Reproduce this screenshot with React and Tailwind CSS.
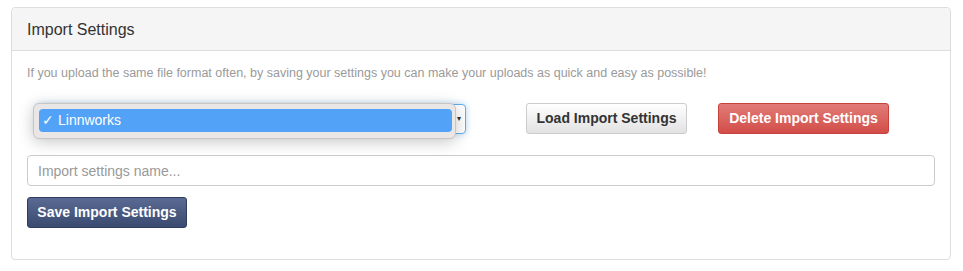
import React, { useState } from "react";

export default function App() {
  const [name, setName] = useState("");

  return (
    <div className="min-h-screen bg-white pt-[7px] pl-[11px] font-['Liberation_Sans',Arial,sans-serif]">
      <div className="w-[940px] h-[253px] rounded-[4px] border border-[#dddddd] bg-white">
        <div className="h-[43px] flex items-center px-[15px] bg-[#f5f5f5] border-b border-[#dddddd] rounded-t-[4px]">
          <h3 className="text-[16px] text-[#333333] pt-[1px]">Import Settings</h3>
        </div>

        <div className="px-[15px] pt-[14px]">
          <p className="text-[12.5px] leading-[16px] text-[#9a9a9a]">
            If you upload the same file format often, by saving your settings you can make your uploads as quick and easy as possible!
          </p>

          <div className="flex items-center mt-[22px] h-[31px]">
            {/* select with its open menu on top */}
            <div className="relative w-[439px] h-[30px]">
              <div className="ml-[10px] h-full rounded-[4px] border border-[#66afe9] bg-white shadow-[0_0_6px_rgba(102,175,233,0.5)] flex items-center justify-end pr-[4px]">
                <span className="text-[8px] text-[#333] leading-none">▾</span>
              </div>
              <div className="absolute left-[6px] top-[-1px] w-[423px] h-[36px] rounded-[6px] border border-[#c8c5c4] bg-[#e9e6e5] shadow-[0_3px_16px_rgba(0,0,0,0.22)] p-[5px] pr-[3px]">
                <div className="h-[23px] rounded-[4px] bg-[#52a2f8] flex items-center pl-[3px] text-white text-[14px] font-medium">
                  <span className="mr-[4px] text-[14px]">✓</span>
                  <span>Linnworks</span>
                </div>
              </div>
            </div>

            <button className="ml-[60px] w-[161px] h-[31px] rounded-[3px] border border-[#cccccc] bg-gradient-to-b from-[#ffffff] to-[#e2e2e2] text-[14px] font-bold text-[#333333]">
              Load Import Settings
            </button>
            <button className="ml-[31px] w-[171px] h-[31px] rounded-[3px] border border-[#c9413d] bg-gradient-to-b from-[#e17b78] to-[#d24c48] text-[14px] font-bold text-white">
              Delete Import Settings
            </button>
          </div>

          <input
            value={name}
            onChange={(e) => setName(e.target.value)}
            placeholder="Import settings name..."
            className="mt-[21px] block w-full h-[31px] rounded-[4px] border border-[#cccccc] px-[10px] text-[14px] text-[#555] placeholder:text-[#999999] outline-none"
          />

          <button className="mt-[11px] w-[160px] h-[31px] rounded-[3px] border border-[#2f3d5e] bg-gradient-to-b from-[#5a6a92] to-[#3a4a70] text-[14px] font-bold text-white">
            Save Import Settings
          </button>
        </div>
      </div>
    </div>
  );
}
